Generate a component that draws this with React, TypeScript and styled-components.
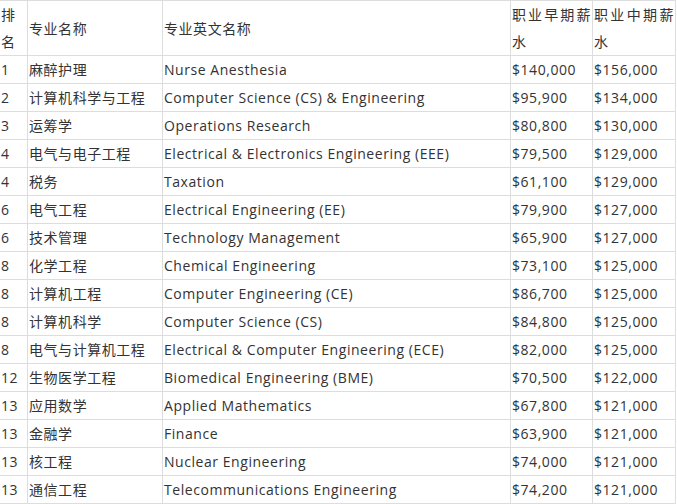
import React from "react";
import styled, { createGlobalStyle } from "styled-components";

const Global = createGlobalStyle`
  html, body { margin: 0; padding: 0; background: #fff; }
  body { font-family: "Open Sans", "Noto Sans CJK SC", sans-serif; }
`;

const Grid = styled.div`
  display: grid;
  grid-template-columns: 28px 135px 348px 82px 83px;
  width: 676px;
  border-top: 1px solid #ddd;
  color: #333;
  font-size: 14px;
  letter-spacing: 0.55px;
`;

const Cell = styled.div<{ $head?: boolean }>`
  box-sizing: border-box;
  border-right: 1px solid #ddd;
  border-bottom: 1px solid #ddd;
  padding: 0 1px;
  line-height: 27px;
  white-space: ${(p) => (p.$head ? "normal" : "nowrap")};
  overflow: hidden;
  display: flex;
  align-items: center;
`;

const HeadText = styled.span`
  display: block;
  width: 100%;
  text-align: justify;
`;

const rows: [string, string, string, string, string][] = [
  ["1", "麻醉护理", "Nurse Anesthesia", "$140,000", "$156,000"],
  ["2", "计算机科学与工程", "Computer Science (CS) & Engineering", "$95,900", "$134,000"],
  ["3", "运筹学", "Operations Research", "$80,800", "$130,000"],
  ["4", "电气与电子工程", "Electrical & Electronics Engineering (EEE)", "$79,500", "$129,000"],
  ["4", "税务", "Taxation", "$61,100", "$129,000"],
  ["6", "电气工程", "Electrical Engineering (EE)", "$79,900", "$127,000"],
  ["6", "技术管理", "Technology Management", "$65,900", "$127,000"],
  ["8", "化学工程", "Chemical Engineering", "$73,100", "$125,000"],
  ["8", "计算机工程", "Computer Engineering (CE)", "$86,700", "$125,000"],
  ["8", "计算机科学", "Computer Science (CS)", "$84,800", "$125,000"],
  ["8", "电气与计算机工程", "Electrical & Computer Engineering (ECE)", "$82,000", "$125,000"],
  ["12", "生物医学工程", "Biomedical Engineering (BME)", "$70,500", "$122,000"],
  ["13", "应用数学", "Applied Mathematics", "$67,800", "$121,000"],
  ["13", "金融学", "Finance", "$63,900", "$121,000"],
  ["13", "核工程", "Nuclear Engineering", "$74,000", "$121,000"],
  ["13", "通信工程", "Telecommunications Engineering", "$74,200", "$121,000"],
];

const headers = ["排名", "专业名称", "专业英文名称", "职业早期薪水", "职业中期薪水"];

export default function App() {
  return (
    <>
      <Global />
      <Grid>
        {headers.map((h) => (
          <Cell key={h} $head>
            <HeadText>{h}</HeadText>
          </Cell>
        ))}
        {rows.map((r, i) =>
          r.map((c, j) => <Cell key={`${i}-${j}`}>{c}</Cell>)
        )}
      </Grid>
    </>
  );
}
